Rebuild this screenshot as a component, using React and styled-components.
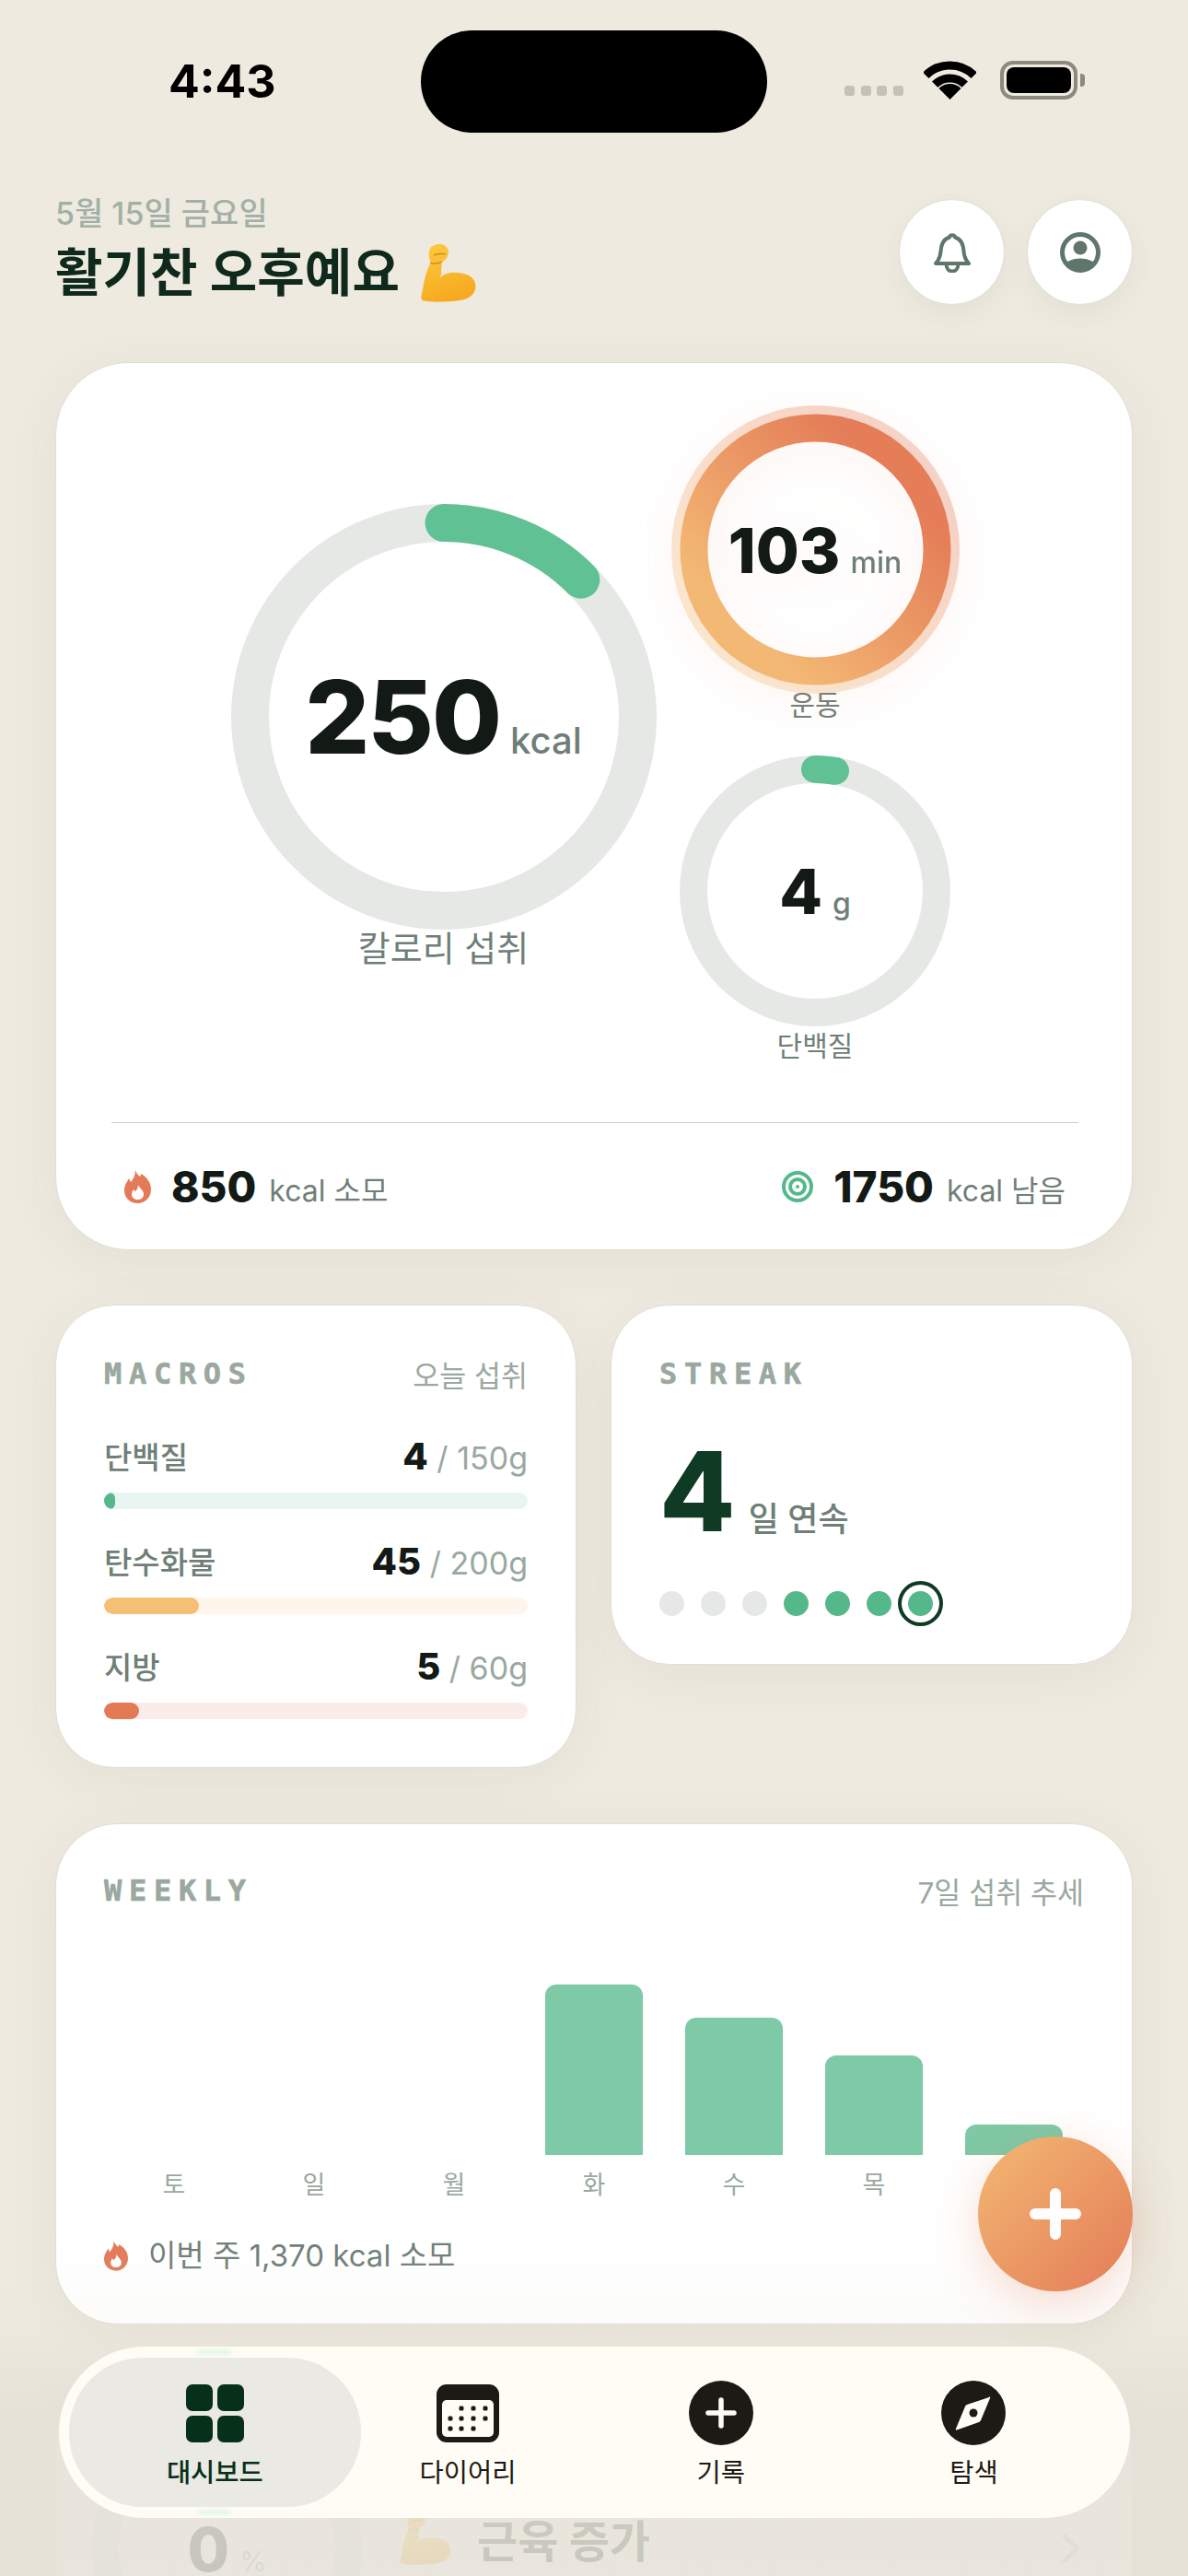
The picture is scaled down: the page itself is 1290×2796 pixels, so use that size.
import React from 'react'
import styled, { createGlobalStyle } from 'styled-components'

const GlobalStyle = createGlobalStyle`
  html, body { margin: 0; padding: 0; background: #EEEAE0; }
  * { box-sizing: border-box; }
`

const textStack = `Inter, "Noto Sans CJK KR", sans-serif`
const monoStack = `"DejaVu Sans Mono", "Liberation Mono", monospace`

const macros = [
  { name: '단백질', value: 4, goal: '150g', width: 12, track: '#E8F5F0', fill: '#55B88A' },
  { name: '탄수화물', value: 45, goal: '200g', width: 103, track: '#FEF6EC', fill: '#F5BF75' },
  { name: '지방', value: 5, goal: '60g', width: 38, track: '#FAEDE9', fill: '#E27A56' },
]

const week = [
  { day: '토', height: 0 },
  { day: '일', height: 0 },
  { day: '월', height: 0 },
  { day: '화', height: 185 },
  { day: '수', height: 149 },
  { day: '목', height: 108 },
  { day: '금', height: 33 },
]

const streak = [false, false, false, true, true, true, true]

function ProgressRing({ size, stroke, percent, color = '#60C194' }) {
  const r = (size - stroke) / 2
  return (
    <svg width={size} height={size} viewBox={`0 0 ${size} ${size}`}>
      <circle cx={size / 2} cy={size / 2} r={r} fill="none" stroke="#E6E8E6" strokeWidth={stroke} />
      {percent > 0 && (
        <circle
          cx={size / 2}
          cy={size / 2}
          r={r}
          fill="none"
          stroke={color}
          strokeWidth={stroke}
          strokeLinecap="round"
          pathLength="100"
          strokeDasharray={`${percent} 100`}
          transform={`rotate(-90 ${size / 2} ${size / 2})`}
        />
      )}
    </svg>
  )
}

function ExerciseRing() {
  return (
    <svg width="313" height="313" viewBox="0 0 313 313">
      <defs>
        <linearGradient id="exerciseGrad" x1="0.2" y1="0.8" x2="0.8" y2="0.2">
          <stop offset="0" stopColor="#F3B873" />
          <stop offset="1" stopColor="#E47D58" />
        </linearGradient>
      </defs>
      <circle cx="156.5" cy="156.5" r="151.5" fill="none" stroke="url(#exerciseGrad)" strokeOpacity="0.32" strokeWidth="10" />
      <circle cx="156.5" cy="156.5" r="132" fill="none" stroke="url(#exerciseGrad)" strokeWidth="30" />
    </svg>
  )
}

function Biceps({ width, height, id }) {
  return (
    <svg width={width} height={height} viewBox="0 0 60 65">
      <defs>
        <linearGradient id={id} x1="0.3" y1="0" x2="0.6" y2="1">
          <stop offset="0" stopColor="#FDC83C" />
          <stop offset="1" stopColor="#F6A81E" />
        </linearGradient>
      </defs>
      <path
        fill={`url(#${id})`}
        d="M17 1C22 -.5 30 3 30 9C30 14 27 19 23 20L22 30C23 34 21 36 20 38C27 31 37 31 46 33C56 35 61 42 59 50C57 60 44 63 32 63C22 64 8 64 2 62C-1 60 1 56 2 50C4 38 7 26 11 21C8 15 8 8 11 4Z"
      />
      <path fill="none" stroke="#C9811A" strokeWidth="1.2" d="M14 13C18 11 23 11 27 12M10 21C14 23 19 22 23 20" />
    </svg>
  )
}

function Flame({ width, height }) {
  return (
    <svg width={width} height={height} viewBox="0 0 29 36">
      <path
        fill="#E47A58"
        d="M12 0C13 3 14 5 17 7C18 6 18 5 18 4C25 8 29 14 29 21C29 30 22 36 14.500 36C6 36 0 30 0 22C0 16 3 13 5 9C6 11 6 12 7 13C10 10 12 5 12 0Z"
      />
      <path
        fill="#FFFFFF"
        d="M15 16C16 19 21 22 21 26C21 30 18 32 14.500 32C11 32 8 30 8 26C8 24 9 23 10 21C11 23 12 23 12 23C14 21 15 19 15 16Z"
      />
    </svg>
  )
}

function Target() {
  return (
    <svg width="34" height="34" viewBox="0 0 34 34">
      <circle cx="17" cy="17" r="15" fill="none" stroke="#55B88A" strokeWidth="4" />
      <circle cx="17" cy="17" r="8" fill="none" stroke="#55B88A" strokeWidth="4" />
      <circle cx="17" cy="17" r="2" fill="#55B88A" />
    </svg>
  )
}

function BellIcon() {
  return (
    <svg width="42" height="44" viewBox="0 0 42 44" fill="none" stroke="#5F776B" strokeWidth="4" strokeLinejoin="round" strokeLinecap="round">
      <path d="M3 34C7 30 8 27 8.500 21C9 12 13 7 18 5.500C18.500 2.500 23.500 2.500 24 5.500C29 7 33 12 33.500 21C34 27 35 30 39 34Z" />
      <path d="M14.500 35C15 45 27 45 27.500 35" />
    </svg>
  )
}

function ProfileIcon() {
  return (
    <svg width="44" height="44" viewBox="0 0 44 44">
      <defs>
        <clipPath id="profileClip">
          <circle cx="22" cy="22" r="20" />
        </clipPath>
      </defs>
      <circle cx="22" cy="22" r="19.500" fill="none" stroke="#5F776B" strokeWidth="5" />
      <circle cx="22" cy="17" r="7.500" fill="#5F776B" />
      <ellipse cx="22" cy="39" rx="18" ry="10.500" fill="#5F776B" clipPath="url(#profileClip)" />
    </svg>
  )
}

function WifiIcon() {
  return (
    <svg width="57" height="42" viewBox="0 0 57 42" fill="none" stroke="#000" strokeWidth="9">
      <path d="M2.300 15.800A37 37 0 0 1 54.700 15.800" />
      <path d="M12.200 25.700A23 23 0 0 1 44.800 25.700" />
      <path fill="#000" stroke="none" d="M28.500 42L16.500 30A17 17 0 0 1 40.500 30Z" />
    </svg>
  )
}

function GridIcon() {
  return (
    <svg width="63" height="63" viewBox="0 0 63 63" fill="#06301A">
      <rect x="0" y="0" width="29" height="29" rx="7" />
      <rect x="34" y="0" width="29" height="29" rx="7" />
      <rect x="0" y="34" width="29" height="29" rx="7" />
      <rect x="34" y="34" width="29" height="29" rx="7" />
    </svg>
  )
}

function CalendarIcon() {
  const dots = [
    [27, 26], [40, 26], [53, 26],
    [15, 37], [27, 37], [40, 37], [53, 37],
    [15, 48], [27, 48], [40, 48],
  ]
  return (
    <svg width="68" height="63" viewBox="0 0 68 63">
      <rect width="68" height="63" rx="11" fill="#1C1A14" />
      <rect x="6" y="17" width="56" height="40" rx="5" fill="#FFFCF5" />
      {dots.map(([x, y]) => (
        <rect key={`${x}-${y}`} x={x - 2.500} y={y - 2.500} width="5" height="5" rx="1.500" fill="#1C1A14" />
      ))}
    </svg>
  )
}

function PlusCircleIcon() {
  return (
    <svg width="70" height="70" viewBox="0 0 70 70">
      <circle cx="35" cy="35" r="35" fill="#1C1A14" />
      <path d="M35 21V49M21 35H49" stroke="#FFFCF5" strokeWidth="5.500" strokeLinecap="round" />
    </svg>
  )
}

function CompassIcon() {
  return (
    <svg width="70" height="70" viewBox="0 0 70 70">
      <circle cx="35" cy="35" r="35" fill="#1C1A14" />
      <path d="M52 18C53 17 53.500 18 53 19L43 43C42.500 44 42 44.500 41 45L17 53.500C16 54 15.500 53 16 52L26 28C26.500 27 27 26.500 28 26Z" fill="#FFFCF5" />
      <circle cx="35" cy="35" r="4.500" fill="#1C1A14" />
    </svg>
  )
}

function PlusIcon() {
  return (
    <svg width="56" height="56" viewBox="0 0 56 56">
      <path d="M28 6V50M6 28H50" stroke="#FFF" strokeWidth="12" strokeLinecap="round" />
    </svg>
  )
}

function Chevron() {
  return (
    <svg width="20" height="32" viewBox="0 0 20 32" fill="none">
      <path d="M3 3L17 16L3 29" stroke="#C8C8C0" strokeWidth="5" strokeLinecap="round" strokeLinejoin="round" />
    </svg>
  )
}

export default function App() {
  return (
    <Phone>
      <GlobalStyle />
      <StatusBar>
        <Time>4:43</Time>
        <Island />
        <StatusIcons>
          <Signal>
            <i /><i /><i /><i />
          </Signal>
          <WifiIcon />
          <Battery>
            <BatteryFill />
          </Battery>
          <BatteryNub />
        </StatusIcons>
      </StatusBar>

      <Main>
        <Header>
          <div>
            <DateText>5월 15일 금요일</DateText>
            <Title>
              활기찬 오후예요
              <Biceps width={60} height={65} id="armTitle" />
            </Title>
          </div>
          <HeaderButtons>
            <RoundButton><BellIcon /></RoundButton>
            <RoundButton><ProfileIcon /></RoundButton>
          </HeaderButtons>
        </Header>

        <HeroCard>
          <RingsRow>
            <CalorieColumn>
              <RingBox>
                <ProgressRing size={462} stroke={41} percent={12.5} />
                <RingCenter>
                  <BigNumber>250</BigNumber>
                  <BigUnit>kcal</BigUnit>
                </RingCenter>
              </RingBox>
              <CalorieLabel>칼로리 섭취</CalorieLabel>
            </CalorieColumn>
            <SideColumn>
              <ExerciseBox>
                <ExerciseRing />
                <RingCenter>
                  <MidNumber>103</MidNumber>
                  <MidUnit>min</MidUnit>
                </RingCenter>
              </ExerciseBox>
              <SideLabel>운동</SideLabel>
              <ProteinRing>
                <ProgressRing size={294} stroke={30} percent={2.67} />
                <RingCenter>
                  <MidNumber>4</MidNumber>
                  <MidUnit>g</MidUnit>
                </RingCenter>
              </ProteinRing>
              <SideLabel $low>단백질</SideLabel>
            </SideColumn>
          </RingsRow>
          <Divider />
          <StatsRow>
            <Stat>
              <Flame width={29} height={36} />
              <StatNumber>850</StatNumber>
              <StatUnit>kcal 소모</StatUnit>
            </Stat>
            <Stat>
              <Target />
              <StatNumber>1750</StatNumber>
              <StatUnit>kcal 남음</StatUnit>
            </Stat>
          </StatsRow>
        </HeroCard>

        <TwoColumns>
          <SmallCard>
            <CardHeader>
              <CardLabel>MACROS</CardLabel>
              <CardNote>오늘 섭취</CardNote>
            </CardHeader>
            <MacroList>
              {macros.map((m) => (
                <div key={m.name}>
                  <MacroTop>
                    <MacroName>{m.name}</MacroName>
                    <span>
                      <MacroValue>{m.value}</MacroValue>
                      <MacroGoal> / {m.goal}</MacroGoal>
                    </span>
                  </MacroTop>
                  <Track $color={m.track}>
                    <Fill $color={m.fill} style={{ width: m.width }} />
                  </Track>
                </div>
              ))}
            </MacroList>
          </SmallCard>

          <SmallCard>
            <CardHeader>
              <CardLabel>STREAK</CardLabel>
            </CardHeader>
            <StreakValue>
              <StreakNumber>4</StreakNumber>
              <StreakText>일 연속</StreakText>
            </StreakValue>
            <Dots>
              {streak.map((on, i) => (
                <Dot key={i} $on={on} $today={i === streak.length - 1} />
              ))}
            </Dots>
          </SmallCard>
        </TwoColumns>

        <WeeklyCard>
          <CardHeader>
            <CardLabel>WEEKLY</CardLabel>
            <CardNote>7일 섭취 추세</CardNote>
          </CardHeader>
          <Chart>
            {week.map((d) => (
              <ChartColumn key={d.day}>
                <BarSlot>
                  {d.height > 0 && <Bar style={{ height: d.height }} />}
                </BarSlot>
                <DayLabel>{d.day}</DayLabel>
              </ChartColumn>
            ))}
          </Chart>
          <WeeklyFooter>
            <Flame width={26} height={33} />
            <span>이번 주 1,370 kcal 소모</span>
          </WeeklyFooter>
        </WeeklyCard>

        <GoalCard>
          <RingBox>
            <ProgressRing size={293} stroke={29} percent={0} />
            <RingCenter>
              <GoalNumber>0</GoalNumber>
              <GoalUnit>%</GoalUnit>
            </RingCenter>
          </RingBox>
          <GoalTitle>
            <Biceps width={56} height={60} id="armGoal" />
            근육 증가
          </GoalTitle>
          <ChevronSlot>
            <Chevron />
          </ChevronSlot>
        </GoalCard>
      </Main>

      <BottomFade />

      <Fab><PlusIcon /></Fab>

      <TabBar>
        <TabItem $active>
          <TabIcon><GridIcon /></TabIcon>
          <TabText $active>대시보드</TabText>
        </TabItem>
        <TabItem>
          <TabIcon><CalendarIcon /></TabIcon>
          <TabText>다이어리</TabText>
        </TabItem>
        <TabItem>
          <TabIcon><PlusCircleIcon /></TabIcon>
          <TabText>기록</TabText>
        </TabItem>
        <TabItem>
          <TabIcon><CompassIcon /></TabIcon>
          <TabText>탐색</TabText>
        </TabItem>
      </TabBar>
    </Phone>
  )
}

const Phone = styled.div`
  position: relative;
  width: 1290px;
  height: 2796px;
  overflow: hidden;
  background: #EEEAE0;
  font-family: ${textStack};
  color: #131A16;
`

const StatusBar = styled.div`
  display: flex;
  align-items: center;
  height: 144px;
  padding: 33px 0 0 183px;
`

const Time = styled.div`
  width: 274px;
  font-size: 50px;
  font-weight: 700;
  line-height: 111px;
  color: #000;
`

const Island = styled.div`
  width: 376px;
  height: 111px;
  border-radius: 56px;
  background: #000;
`

const StatusIcons = styled.div`
  display: flex;
  align-items: center;
  margin-left: 84px;
  margin-top: -4px;
`

const Signal = styled.div`
  display: flex;
  gap: 6.500px;
  margin-top: 24px;
  margin-right: 22px;

  i {
    display: block;
    width: 11px;
    height: 11px;
    border-radius: 3px;
    background: #C5C1B6;
  }
`

const Battery = styled.div`
  width: 84px;
  height: 42px;
  margin-left: 26px;
  padding: 3px;
  border: 4px solid #8E897F;
  border-radius: 14px;
`

const BatteryFill = styled.div`
  width: 100%;
  height: 100%;
  border-radius: 8px;
  background: #000;
`

const BatteryNub = styled.div`
  width: 5px;
  height: 14px;
  margin-left: 3px;
  border-radius: 0 4px 4px 0;
  background: #8E897F;
`

const Main = styled.div`
  display: flex;
  flex-direction: column;
  padding: 0 60px;
`

const Header = styled.div`
  display: flex;
  justify-content: space-between;
  margin-top: 68px;
`

const DateText = styled.div`
  font-size: 34px;
  font-weight: 500;
  line-height: 40px;
  color: #A2B0A6;
`

const Title = styled.div`
  display: flex;
  align-items: center;
  gap: 23px;
  margin-top: 8px;
  font-size: 56px;
  font-weight: 700;
  line-height: 72px;
  color: #0F2A1C;
`

const HeaderButtons = styled.div`
  display: flex;
  gap: 24px;
  margin-top: 4px;
`

const RoundButton = styled.div`
  display: flex;
  align-items: center;
  justify-content: center;
  width: 115px;
  height: 115px;
  border-radius: 50%;
  background: #fff;
  border: 1px solid #E2DFD6;
  box-shadow: 0 10px 30px rgba(60, 60, 40, 0.06);
`

const Card = styled.div`
  background: #fff;
  border: 1px solid #E1DED5;
  box-shadow: 0 10px 60px rgba(70, 70, 40, 0.06);
`

const HeroCard = styled(Card)`
  margin-top: 61px;
  height: 964px;
  padding: 46px 58px 0 60px;
  border-radius: 80px;
`

const RingsRow = styled.div`
  display: flex;
  justify-content: center;
  align-items: center;
  gap: 16px;
`

const CalorieColumn = styled.div`
  display: flex;
  flex-direction: column;
  align-items: center;
  margin-top: 6px;
`

const RingBox = styled.div`
  position: relative;
  display: flex;
`

const ExerciseBox = styled(RingBox)`
  filter: drop-shadow(0 10px 26px rgba(228, 125, 88, 0.1));
`

const RingCenter = styled.div`
  position: absolute;
  inset: 0;
  display: flex;
  align-items: baseline;
  justify-content: center;
  gap: 11px;
  align-content: center;
  flex-wrap: wrap;
`

const BigNumber = styled.span`
  font-size: 110px;
  font-weight: 800;
  line-height: 1;
  letter-spacing: -2px;
`

const BigUnit = styled.span`
  font-size: 40px;
  font-weight: 500;
  color: #6F7F78;
`

const MidNumber = styled.span`
  font-size: 68px;
  font-weight: 800;
  line-height: 1;
`

const MidUnit = styled.span`
  font-size: 32px;
  font-weight: 500;
  color: #6F7F78;
`

const CalorieLabel = styled.div`
  font-size: 38px;
  line-height: 40px;
  color: #6F7F78;
`

const SideColumn = styled.div`
  display: flex;
  flex-direction: column;
  align-items: center;
  width: 313px;
`

const SideLabel = styled.div`
  margin-top: ${(p) => (p.$low ? '6px' : '-3px')};
  font-size: 30px;
  line-height: 30px;
  color: #6F7F78;
`

const ProteinRing = styled(RingBox)`
  margin-top: 40px;
`

const Divider = styled.div`
  height: 1px;
  margin-top: 68px;
  background: #C9CDCA;
`

const StatsRow = styled.div`
  display: flex;
  justify-content: space-between;
  margin-top: 44px;
  padding: 0 14px;
`

const Stat = styled.div`
  display: flex;
  align-items: center;
`

const StatNumber = styled.span`
  margin-left: 22px;
  font-size: 46px;
  font-weight: 800;
  line-height: 50px;
`

const StatUnit = styled.span`
  margin-left: 14px;
  margin-top: 4px;
  font-size: 32px;
  color: #6F7F78;
`

const TwoColumns = styled.div`
  display: grid;
  grid-template-columns: 566px 567px;
  gap: 37px;
  align-items: start;
  margin-top: 59px;
`

const SmallCard = styled(Card)`
  padding: 54px 52px 52px;
  border-radius: 64px;
`

const CardHeader = styled.div`
  display: flex;
  align-items: center;
  justify-content: space-between;
  height: 40px;
`

const CardLabel = styled.div`
  font-family: ${monoStack};
  font-size: 32px;
  font-weight: 700;
  letter-spacing: 7.700px;
  -webkit-text-stroke: 0.6px #9AA89F;
  color: #9AA89F;
`

const CardNote = styled.div`
  font-size: 31.500px;
  color: #9AA89F;
`

const MacroList = styled.div`
  display: flex;
  flex-direction: column;
  gap: 34px;
  margin-top: 47px;
`

const MacroTop = styled.div`
  display: flex;
  justify-content: space-between;
  align-items: center;
  height: 44px;
`

const MacroName = styled.span`
  font-size: 33px;
  font-weight: 500;
  color: #6F7F78;
`

const MacroValue = styled.span`
  font-size: 40px;
  font-weight: 800;
`

const MacroGoal = styled.span`
  font-size: 34px;
  color: #9AA89F;
`

const Track = styled.div`
  height: 18px;
  margin-top: 18px;
  border-radius: 9px;
  overflow: hidden;
  background: ${(p) => p.$color};
`

const Fill = styled.div`
  height: 100%;
  border-radius: 9px;
  background: ${(p) => p.$color};
`

const StreakValue = styled.div`
  display: flex;
  align-items: baseline;
  gap: 14px;
  margin-top: 48px;
`

const StreakNumber = styled.span`
  font-size: 120px;
  font-weight: 800;
  line-height: 120px;
  color: #0F3B24;
`

const StreakText = styled.span`
  font-size: 36px;
  font-weight: 500;
  color: #6F7F78;
`

const Dots = styled.div`
  display: flex;
  gap: 18px;
  margin-top: 48px;
`

const Dot = styled.div`
  width: 27px;
  height: 27px;
  border-radius: 50%;
  background: ${(p) => (p.$on ? '#55B88A' : '#E6E8E7')};
  box-shadow: ${(p) => (p.$today ? '0 0 0 7px #fff, 0 0 0 11px #0F3B24' : 'none')};
`

const WeeklyCard = styled(Card)`
  margin-top: 60px;
  padding: 52px 52px 54px;
  border-radius: 68px;
`

const Chart = styled.div`
  display: grid;
  grid-template-columns: repeat(7, 1fr);
  margin-top: 67px;
`

const ChartColumn = styled.div`
  display: flex;
  flex-direction: column;
  align-items: center;
`

const BarSlot = styled.div`
  display: flex;
  align-items: flex-end;
  justify-content: center;
  width: 100%;
  height: 200px;
`

const Bar = styled.div`
  width: 70%;
  border-radius: 12px 12px 0 0;
  background: #7EC9A6;
`

const DayLabel = styled.div`
  margin-top: 17px;
  font-size: 27px;
  line-height: 32px;
  color: #9AA89F;
`

const WeeklyFooter = styled.div`
  display: flex;
  align-items: center;
  gap: 22px;
  margin-top: 40px;
  font-size: 33px;
  line-height: 40px;
  color: #6F7F78;
`

const GoalCard = styled(Card)`
  display: flex;
  margin-top: 61px;
  padding: 35px 56px 38px 39px;
  border-radius: 68px;
`

const GoalNumber = styled.span`
  font-size: 66px;
  font-weight: 800;
  line-height: 1;
`

const GoalUnit = styled.span`
  font-size: 30px;
  color: #9AA89F;
`

const GoalTitle = styled.div`
  display: flex;
  align-items: center;
  gap: 28px;
  height: 60px;
  margin: 105px 0 0 41px;
  font-size: 48px;
  font-weight: 700;
  color: #0F2A1C;
`

const ChevronSlot = styled.div`
  margin: 130px 0 0 auto;
`

const BottomFade = styled.div`
  position: absolute;
  left: 0;
  right: 0;
  top: 2430px;
  bottom: 0;
  background: linear-gradient(
    to bottom,
    rgba(229, 225, 215, 0) 0,
    rgba(229, 225, 215, 0.12) 90px,
    rgba(229, 225, 215, 0.9) 190px,
    rgba(229, 225, 215, 0.86) 100%
  );
`

const Fab = styled.div`
  position: absolute;
  left: 1062px;
  top: 2319px;
  display: flex;
  align-items: center;
  justify-content: center;
  width: 168px;
  height: 168px;
  border-radius: 50%;
  background: linear-gradient(135deg, #F3B873, #E47C58);
  box-shadow: 0 12px 50px rgba(228, 124, 88, 0.28);
`

const TabBar = styled.div`
  position: absolute;
  left: 64px;
  top: 2547px;
  display: grid;
  grid-template-columns: repeat(4, 274.700px);
  width: 1163px;
  height: 186px;
  padding: 0 32px;
  border-radius: 93px;
  background: #FFFCF5;
`

const TabItem = styled.div`
  position: relative;
  display: flex;
  flex-direction: column;
  align-items: center;
  padding-top: 37px;

  ${(p) =>
    p.$active &&
    `
    &::before {
      content: '';
      position: absolute;
      top: 12px;
      bottom: 12px;
      left: -21px;
      right: -21px;
      border-radius: 80px;
      background: #EBE9E3;
    }
    &::after {
      content: '';
      position: absolute;
      top: 4px;
      bottom: 4px;
      left: 50%;
      width: 36px;
      margin-left: -18px;
      border-top: 4px solid #D6F5E2;
      border-bottom: 4px solid #D6F5E2;
      filter: blur(2px);
    }
  `}
`

const TabIcon = styled.div`
  position: relative;
  display: flex;
  align-items: center;
  height: 70px;
`

const TabText = styled.div`
  position: relative;
  margin-top: 12px;
  font-size: 28.500px;
  line-height: 36px;
  font-weight: ${(p) => (p.$active ? 500 : 400)};
  color: ${(p) => (p.$active ? '#06301A' : '#1C1A14')};
`
